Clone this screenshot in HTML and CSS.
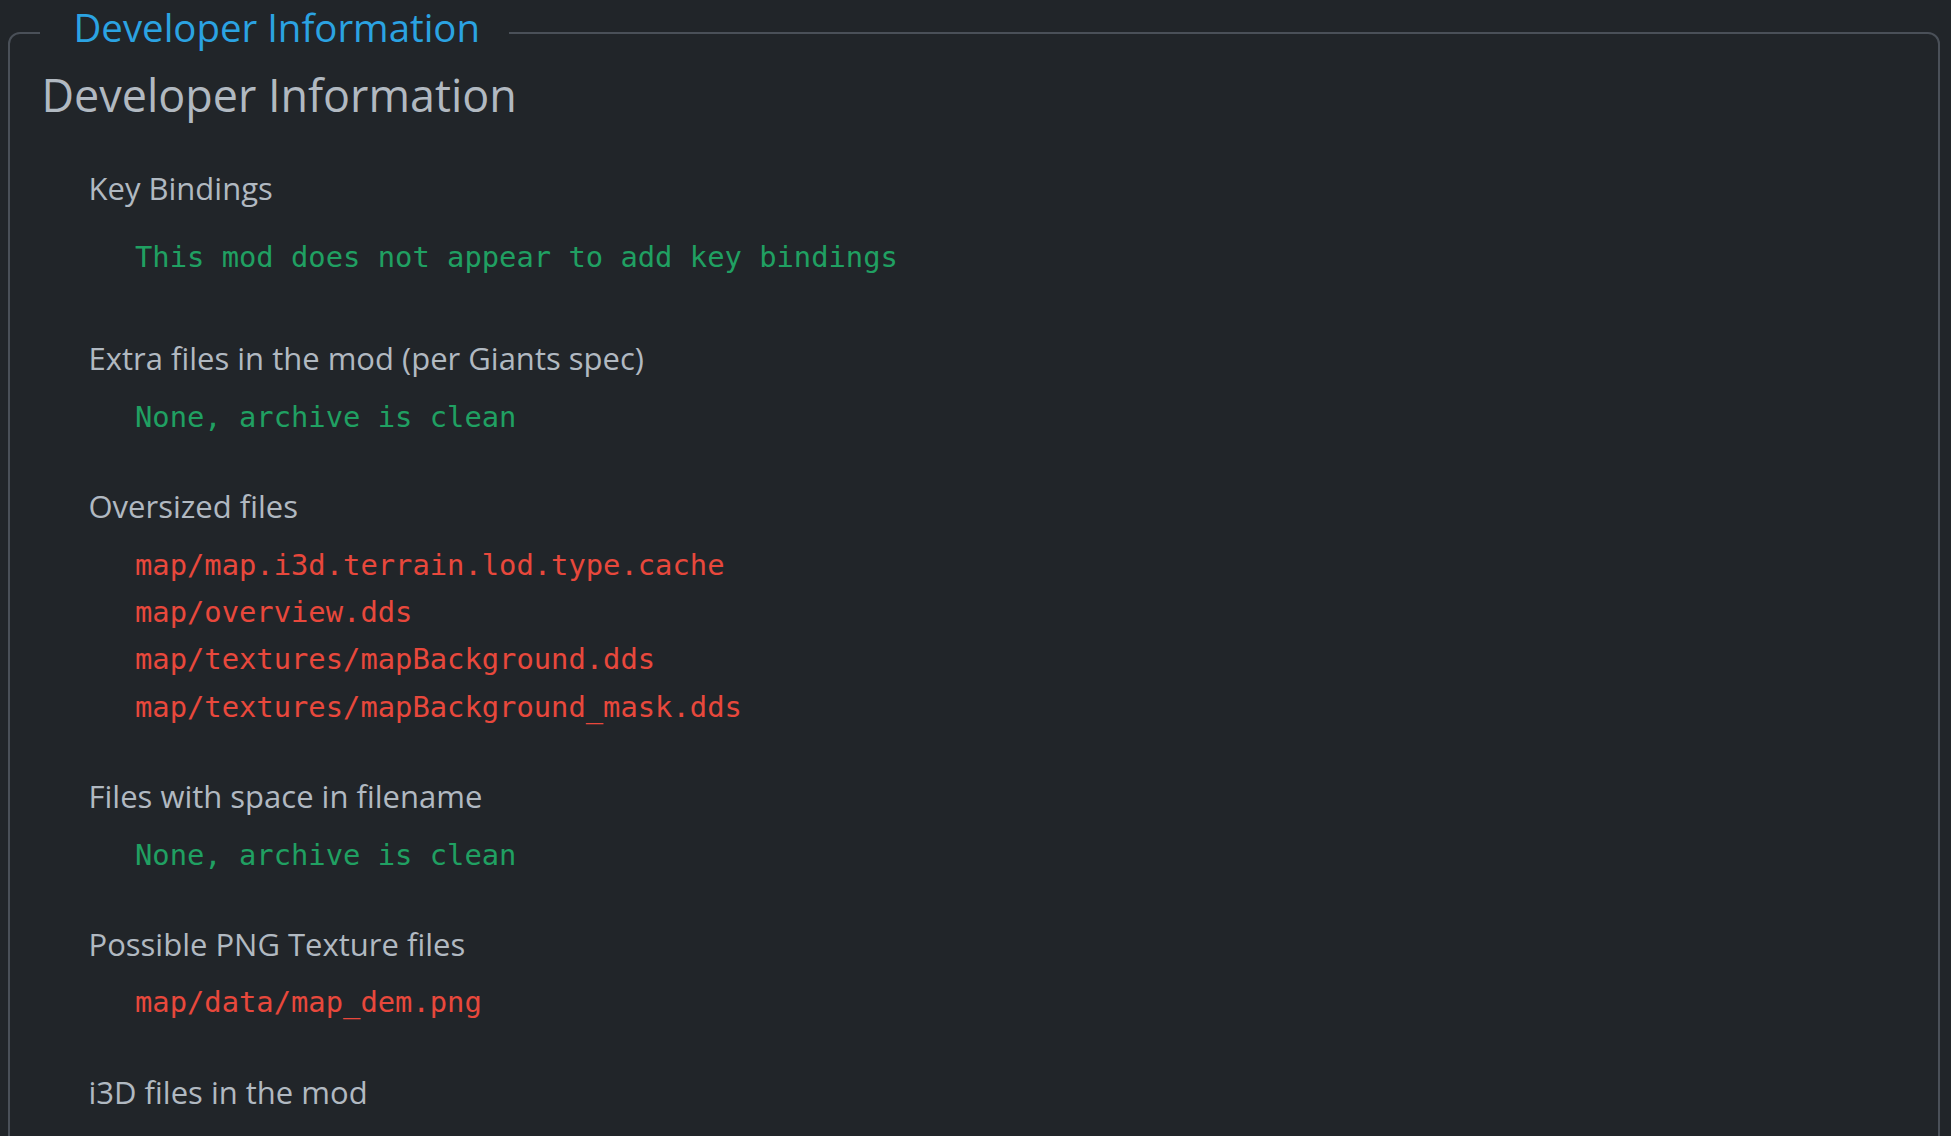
FILE: index.html
```html
<!DOCTYPE html>
<html lang="en">
<head>
<meta charset="utf-8">
<title>Developer Information</title>
<link rel="stylesheet" href="styles.css">
</head>
<body>
<fieldset class="panel">
  <legend class="panel-legend">Developer Information</legend>
  <h2 class="panel-title">Developer Information</h2>
  <div class="sections">
    <section class="section section-keys">
      <h5 class="section-title">Key Bindings</h5>
      <ul class="file-list file-list-keys">
        <li class="ok">This mod does not appear to add key bindings</li>
      </ul>
    </section>
    <section class="section">
      <h5 class="section-title">Extra files in the mod (per Giants spec)</h5>
      <ul class="file-list">
        <li class="ok">None, archive is clean</li>
      </ul>
    </section>
    <section class="section">
      <h5 class="section-title">Oversized files</h5>
      <ul class="file-list">
        <li class="bad">map/map.i3d.terrain.lod.type.cache</li>
        <li class="bad">map/overview.dds</li>
        <li class="bad">map/textures/mapBackground.dds</li>
        <li class="bad">map/textures/mapBackground_mask.dds</li>
      </ul>
    </section>
    <section class="section">
      <h5 class="section-title">Files with space in filename</h5>
      <ul class="file-list">
        <li class="ok">None, archive is clean</li>
      </ul>
    </section>
    <section class="section">
      <h5 class="section-title">Possible PNG Texture files</h5>
      <ul class="file-list">
        <li class="bad">map/data/map_dem.png</li>
      </ul>
    </section>
    <section class="section">
      <h5 class="section-title">i3D files in the mod</h5>
    </section>
  </div>
</fieldset>
</body>
</html>
```
FILE: styles.css
```css
html, body {
  margin: 0;
  padding: 0;
  background: #212529;
  overflow: hidden;
}

body {
  font-family: "Open Sans", "Noto Sans", sans-serif;
  color: #b1b9c1;
}

.panel {
  margin: 4px 11px 0 8px;
  padding: 0 28px 60px 28px;
  border: 2px solid #4a5058;
  border-radius: 12px;
  min-width: 0;
}

.panel-legend {
  margin-left: 2px;
  padding: 0 28.5px 12px 33.5px;
  font-size: 38.4px;
  line-height: 46px;
  color: #2ba3e2;
  font-weight: 400;
}

.panel-title {
  margin: 5.6px 0 0 3.5px;
  font-size: 44.9px;
  line-height: 1.2;
  font-weight: 400;
  color: #b1b9c1;
}

.sections {
  display: flex;
  flex-direction: column;
  gap: 47.4px;
  margin-top: 48.9px;
  padding-left: 50.5px;
}

.section-title {
  margin: 0;
  font-size: 31px;
  line-height: 37.2px;
  font-weight: 400;
  color: #b1b9c1;
}

.file-list {
  list-style: none;
  margin: 16.1px 0 0 0;
  padding: 0 0 0 46.5px;
  font-family: "DejaVu Sans Mono", "Liberation Mono", monospace;
  font-size: 28.8px;
  line-height: 47.3px;
}

.file-list-keys {
  margin-top: 26.6px;
  margin-bottom: 11.5px;
}

.ok {
  color: #20a062;
}

.bad {
  color: #e8483c;
}
```
